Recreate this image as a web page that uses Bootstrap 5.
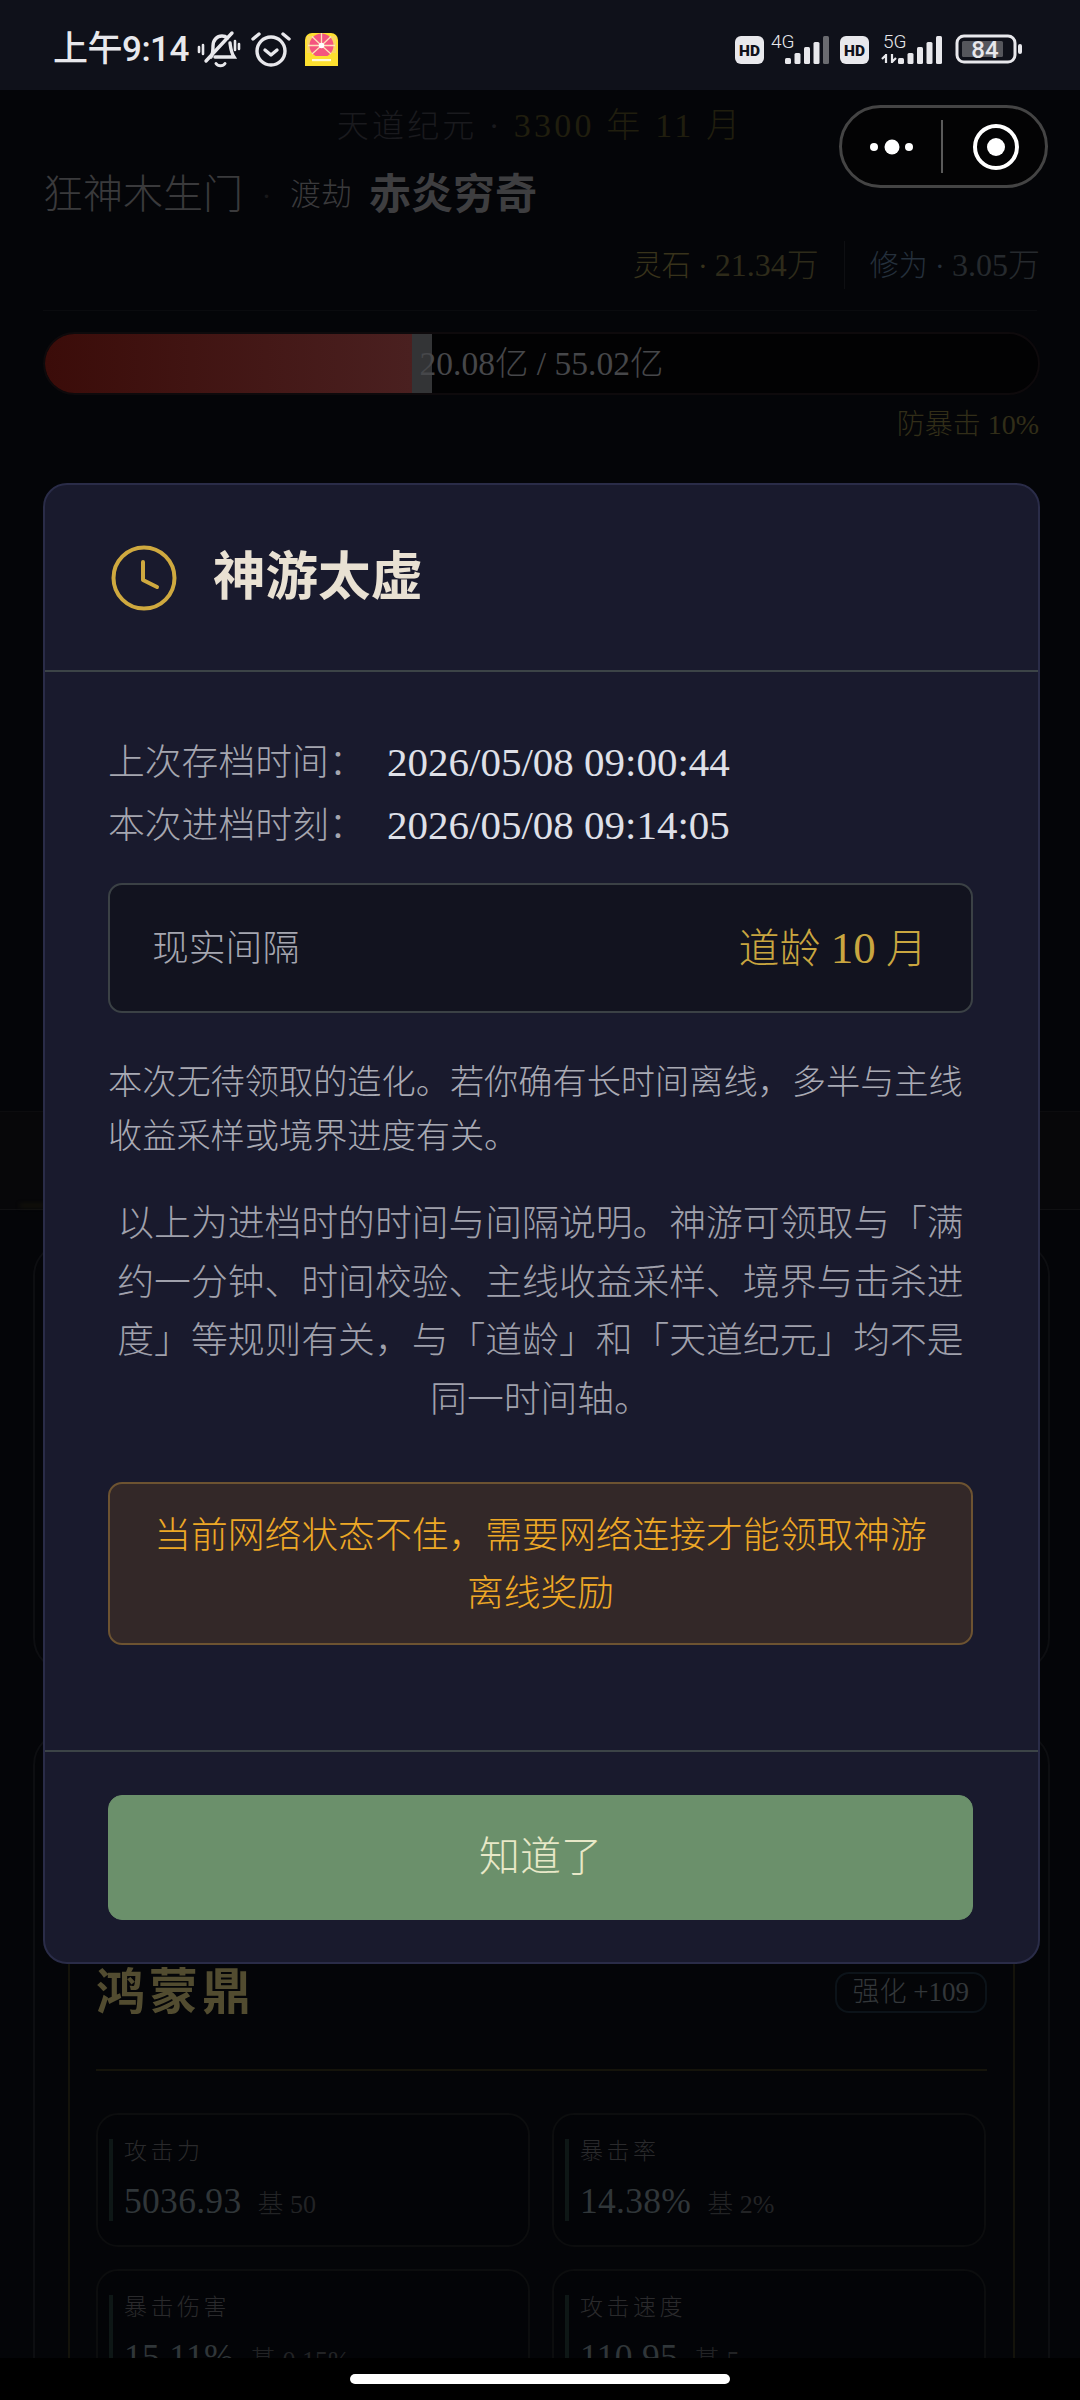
<!DOCTYPE html>
<html lang="zh-CN">
<head>
    <meta charset="UTF-8">
    <meta name="viewport" content="width=device-width, initial-scale=1.0">
    <title>神游太虚</title>
    <link href="https://cdn.jsdelivr.net/npm/bootstrap@5.3.2/dist/css/bootstrap.min.css" rel="stylesheet">
    <style>
        html, body { background: #000; }
        body { width: 1080px; height: 2400px; overflow: hidden; position: relative; font-family: "Liberation Serif", "Noto Sans CJK SC", serif; font-weight: 300; }

        /* status bar */
        .status-bar { height: 90px; background: #0f111a; color: #e8e8ec; padding: 0 58px 0 53px; font-family: Roboto, "Noto Sans CJK SC", sans-serif; }
        .status-time { font-size: 35px; font-weight: 500; line-height: 1; letter-spacing: -.5px; }
        .status-bar svg { display: block; }
        .status-bar text { font-family: Roboto, sans-serif; fill: #e8e8ec; }
        .alarm-ico { margin: 0 14px 0 10px; }

        /* dimmed game page behind the dialog */
        .game-page { height: 2268px; overflow: hidden; position: relative; background: #040508; }
        .era-line { height: 70px; color: #1a1a1e; font-size: 32px; letter-spacing: 3.2px; }
        .era-line b { font-weight: 300; color: #201e0e; font-size: 34px; }
        .sect-row { height: 70px; padding-left: 43px; color: #3a3a3c; }
        .sect-name { font-size: 40px; }
        .sect-dot { width: 47px; text-align: center; color: #18181a; font-size: 30px; }
        .sect-rank { font-size: 31px; }
        .sect-boss { font-size: 42px; font-weight: 700; margin-left: 17px; color: #3e3e40; }
        .res-row { height: 60px; margin-top: 5px; padding-right: 40px; font-size: 29px; }
        .res-stone { color: #38331b; }
        .res-stone .num { color: #2e2b1a; }
        .res-cult { color: #25303c; border-left: 1px solid #0e0f12; margin-left: 25px; padding-left: 25px; }
        .res-cult .num { color: #262a2e; }
        .res-row .num { font-size: 32px; }
        .page-rule { height: 1px; margin: 15px 43px 21px; background: #0a0b0e; }
        .hp-track { height: 63px; margin: 0 40px 0 43px; background: #020203; border: 2px solid #0e0a0c; border-radius: 32px; overflow: hidden; position: relative; }
        .hp-fill { width: 367px; background: linear-gradient(90deg, #3b0c09, #4a2020); }
        .hp-tip { width: 20px; background: #333436; }
        .hp-text { color: #46474a; font-size: 33.500px; white-space: nowrap; }
        .guard-line { height: 60px; padding-right: 41px; color: #322e18; font-size: 28px; }
        .tab-band { height: 99px; margin-top: 656px; background: #070709; border-top: 1px solid #0c0c0e; border-bottom: 1px solid #101012; position: relative; }
        .tab-glow { position: absolute; left: 20px; bottom: 2px; width: 24px; height: 3px; background: #17150b; filter: blur(2px); }
        .panel { margin: 0 30px 0 33px; border: 2px solid #0d0e11; border-radius: 34px; }
        .panel-top { height: 430px; margin-top: 32px; }
        .panel-gear { margin-top: 59px; height: 700px; padding: 165px 33px 0 33px; }
        .gear-box { height: 600px; border: 2px solid #14130b; border-bottom: 0; padding: 68px 26px 0 26px; }
        .gear-name { font-size: 49px; font-weight: 700; color: #524c30; letter-spacing: 4px; line-height: 1; }
        .gear-level { height: 41px; padding: 0 16px; border: 2px solid #0c1319; border-radius: 14px; color: #33373a; font-size: 27px; }
        .gear-rule { height: 2px; margin: 52px 0 42px; background: #15140b; }
        .stat-grid { display: grid; grid-template-columns: 434px 434px; column-gap: 22px; row-gap: 22px; }
        .stat-cell { height: 134px; border: 2px solid #0c0d0e; border-radius: 22px; background: #030407; padding: 24px 0 0 11px; }
        .stat-inner { border-left: 4px solid #0e1716; padding-left: 11px; height: 82px; }
        .stat-label { color: #2a2a2c; font-size: 23px; letter-spacing: 3.5px; line-height: 26px; }
        .stat-value { color: #303639; font-size: 35.500px; line-height: 40px; margin-top: 16px; letter-spacing: .3px; white-space: nowrap; }
        .stat-base { color: #222325; font-size: 26px; margin-left: 16px; letter-spacing: 0; }

        /* wechat capsule */
        .mini-capsule { position: absolute; left: 839px; top: 15px; width: 209px; height: 83px; border: 3px solid #444; border-radius: 42px; background: #030304; }

        /* dialog */
        .dialog-box { position: absolute; left: 43px; top: 483px; width: 997px; height: 1481px; background: #191a2d; border: 2px solid #2a2c48; border-radius: 24px; font-size: 36.800px; color: #a5a6b0; }
        .dialog-head { height: 187px; padding-left: 66px; gap: 36px; border-bottom: 2px solid #3c4447; }
        .dialog-head h2 { margin: 0; font-size: 52.500px; font-weight: 700; color: #e9e1d3; line-height: 1; }
        .dialog-body { flex: 1; padding: 59px 65px 0 63px; }
        .time-row { height: 63px; }
        .time-key { width: 279px; }
        .time-val { color: #dfe0e8; font-size: 41px; line-height: 1; }
        .gap-box { height: 130px; margin-top: 26px; padding: 2px 44px 0 42px; background: #12131f; border: 2px solid #3b4145; border-radius: 14px; }
        .gap-val { color: #c9a640; font-size: 41px; }
        .gap-val .num { font-size: 45px; }
        .note-first { font-size: 34.200px; line-height: 54px; margin: 43px 0 0; color: #a9aab4; }
        .note-second { line-height: 58.700px; margin: 31px 0 0; color: #a0a1ac; }
        .warn-box { height: 163px; margin-top: 52px; padding: 23px 30px 0; line-height: 58.600px; background: #332828; border: 2px solid #6d5331; border-radius: 14px; color: #eea826; }
        .dialog-foot { height: 212px; padding: 43px 65px 0 63px; border-top: 2px solid #3c4447; }
        .ok-btn { height: 125px; --bs-btn-bg: #6b906b; --bs-btn-hover-bg: #6b906b; --bs-btn-color: #e8e8c8; --bs-btn-border-color: #6b906b; --bs-btn-border-radius: 14px; font-size: 41px; font-weight: 300; }

        /* gesture bar */
        .gesture-bar { height: 42px; background: #000; padding-top: 16px; }
        .gesture-pill { width: 380px; height: 10px; border-radius: 5px; background: #fff; }
    </style>
</head>
<body>
    <div class="status-bar d-flex align-items-center justify-content-between">
        <div class="d-flex align-items-center pt-2">
            <span class="status-time">上午9:14</span>
            <!-- muted bell -->
            <svg class="ms-2" width="44" height="38" viewBox="0 0 44 38" fill="none" stroke="#e8e8ec" stroke-width="3.400" stroke-linecap="round">
                <path d="M14 27c2-3 2-6 2-11 0-6 4-10 9-10 2 0 4 .7 5.400 2"/>
                <path d="M33 13c.6 4 .8 9 4 14H18"/>
                <path d="M9 31 35 3"/>
                <path d="M19 33.500c2 3 7 3 9 0" stroke-width="3"/>
                <path d="M6 15v9M2 17v5M38 11v9M42 14v5" stroke-width="2.600"/>
            </svg>
            <!-- alarm -->
            <svg class="alarm-ico" width="40" height="36" viewBox="0 0 40 36" fill="none" stroke="#e8e8ec" stroke-width="3.400" stroke-linecap="round" stroke-linejoin="round">
                <circle cx="20" cy="20" r="14"/>
                <path d="M14 19l6 5 6-5"/>
                <path d="M2 8l6-5M38 8l-6-5"/>
            </svg>
            <!-- app notification icon -->
            <svg width="33" height="33" viewBox="0 0 33 33">
                <rect width="33" height="33" rx="7" fill="#fde02f"/>
                <path d="M2 3h29v17H2z" fill="#f3c9a0" opacity=".45"/>
                <circle cx="16.500" cy="12.500" r="12" fill="#f4557f"/>
                <path d="M16.500 12.500V0M16.500 12.500 7 3.500M16.500 12.500 26 3.500M16.500 12.500H3M16.500 12.500H30M16.500 12.500 7 21M16.500 12.500 26 21" stroke="#fde2b8" stroke-width="1.300"/>
                <circle cx="16.500" cy="12.500" r="2.800" fill="#fff"/>
                <rect x="0" y="23" width="33" height="10" fill="#fde02f"/>
                <rect x="7" y="26" width="19" height="2.200" fill="#fff" opacity=".8"/>
            </svg>
        </div>
        <svg width="287" height="40" viewBox="0 -7 287 40">
            <!-- HD + 4G -->
            <rect x="0" y="4" width="29" height="28" rx="6" fill="#e8e8ec"/>
            <text x="14.500" y="24" font-size="15.500" font-weight="900" text-anchor="middle" style="fill:#0f111a">HD</text>
            <text x="36" y="15.500" font-size="19">4G</text>
            <rect x="50" y="26" width="6" height="6" rx="1.500" fill="#e8e8ec"/>
            <rect x="59.500" y="21" width="6" height="11" rx="1.500" fill="#e8e8ec"/>
            <rect x="69" y="15" width="6" height="17" rx="1.500" fill="#e8e8ec"/>
            <rect x="78.500" y="10" width="6" height="22" rx="1.500" fill="#e8e8ec"/>
            <rect x="88" y="4" width="6" height="28" rx="1.500" fill="#6a6b70"/>
            <!-- HD + 5G -->
            <rect x="105" y="4" width="29" height="28" rx="6" fill="#e8e8ec"/>
            <text x="119.500" y="24" font-size="15.500" font-weight="900" text-anchor="middle" style="fill:#0f111a">HD</text>
            <text x="148" y="15.500" font-size="19">5G</text>
            <path d="M151 22v9M147 27l4-4M157 22v9M157 30l4-4" fill="none" stroke="#e8e8ec" stroke-width="2.200"/>
            <rect x="163" y="26" width="6" height="6" rx="1.500" fill="#e8e8ec"/>
            <rect x="172.500" y="21" width="6" height="11" rx="1.500" fill="#e8e8ec"/>
            <rect x="182" y="15" width="6" height="17" rx="1.500" fill="#e8e8ec"/>
            <rect x="191.500" y="10" width="6" height="22" rx="1.500" fill="#e8e8ec"/>
            <rect x="201" y="4" width="6" height="28" rx="1.500" fill="#e8e8ec"/>
            <!-- battery -->
            <rect x="222" y="4" width="58" height="26" rx="7" fill="none" stroke="#e8e8ec" stroke-width="3"/>
            <rect x="227" y="9" width="41" height="16" rx="1.500" fill="#55565c"/>
            <text x="250" y="25.500" font-size="24" font-weight="500" text-anchor="middle">84</text>
            <rect x="283" y="12" width="4" height="10" rx="2" fill="#e8e8ec"/>
        </svg>
    </div>

    <div class="game-page">
        <div class="era-line d-flex align-items-center justify-content-center"><span>天道纪元 · <b>3300 年 11 月</b></span></div>
        <div class="sect-row d-flex align-items-center">
            <span class="sect-name">狂神木生门</span>
            <span class="sect-dot">·</span>
            <span class="sect-rank">渡劫</span>
            <span class="sect-boss">赤炎穷奇</span>
        </div>
        <div class="res-row d-flex align-items-center justify-content-end">
            <span class="res-stone">灵石 · <span class="num">21.34万</span></span>
            <span class="res-cult">修为 · <span class="num">3.05万</span></span>
        </div>
        <div class="page-rule"></div>
        <div class="hp-track d-flex">
            <div class="hp-fill"></div>
            <div class="hp-tip"></div>
            <div class="hp-text position-absolute top-50 start-50 translate-middle">20.08亿 / 55.02亿</div>
        </div>
        <div class="guard-line d-flex align-items-center justify-content-end">防暴击 10%</div>
        <div class="tab-band"><div class="tab-glow"></div></div>
        <div class="panel panel-top"></div>
        <div class="panel panel-gear">
            <div class="gear-box">
                <div class="d-flex align-items-center justify-content-between">
                    <div class="gear-name">鸿蒙鼎</div>
                    <div class="gear-level d-flex align-items-center">强化 +109</div>
                </div>
                <div class="gear-rule"></div>
                <div class="stat-grid">
                    <div class="stat-cell"><div class="stat-inner"><div class="stat-label">攻击力</div><div class="stat-value">5036.93<span class="stat-base">基 50</span></div></div></div>
                    <div class="stat-cell"><div class="stat-inner"><div class="stat-label">暴击率</div><div class="stat-value">14.38%<span class="stat-base">基 2%</span></div></div></div>
                    <div class="stat-cell"><div class="stat-inner"><div class="stat-label">暴击伤害</div><div class="stat-value">15.11%<span class="stat-base">基 0.15%</span></div></div></div>
                    <div class="stat-cell"><div class="stat-inner"><div class="stat-label">攻击速度</div><div class="stat-value">110.95<span class="stat-base">基 5</span></div></div></div>
                </div>
            </div>
        </div>
        <div class="mini-capsule d-flex align-items-center justify-content-center">
            <svg class="me-2" width="160" height="60" viewBox="0 0 160 60" fill="#fff">
                <circle cx="14" cy="30" r="4"/>
                <circle cx="32" cy="30" r="7.500"/>
                <circle cx="49" cy="30" r="4"/>
                <rect x="81" y="3" width="2" height="53" fill="#5a5a5a"/>
                <circle cx="136" cy="30" r="21" fill="none" stroke="#fff" stroke-width="4"/>
                <circle cx="136" cy="30" r="9"/>
            </svg>
        </div>
    </div>

    <div class="gesture-bar d-flex justify-content-center"><div class="gesture-pill"></div></div>

    <div class="dialog-box d-flex flex-column">
        <div class="dialog-head d-flex align-items-center">
            <svg width="66" height="66" viewBox="0 0 66 66" fill="none" stroke="#cfa93f" stroke-width="4" stroke-linecap="round" stroke-linejoin="round">
                <circle cx="33" cy="33" r="30.500"/>
                <path d="M32 17v18l14 7"/>
            </svg>
            <h2>神游太虚</h2>
        </div>
        <div class="dialog-body">
            <div class="time-row d-flex align-items-center">
                <span class="time-key">上次存档时间：</span>
                <span class="time-val">2026/05/08 09:00:44</span>
            </div>
            <div class="time-row d-flex align-items-center">
                <span class="time-key">本次进档时刻：</span>
                <span class="time-val">2026/05/08 09:14:05</span>
            </div>
            <div class="gap-box d-flex align-items-center justify-content-between">
                <span>现实间隔</span>
                <span class="gap-val">道龄 <span class="num">10</span> 月</span>
            </div>
            <p class="note-first">本次无待领取的造化。若你确有长时间离线，多半与主线收益采样或境界进度有关。</p>
            <p class="note-second text-center">以上为进档时的时间与间隔说明。神游可领取与「满约一分钟、时间校验、主线收益采样、境界与击杀进度」等规则有关，与「道龄」和「天道纪元」均不是同一时间轴。</p>
            <div class="warn-box text-center">当前网络状态不佳，需要网络连接才能领取神游离线奖励</div>
        </div>
        <div class="dialog-foot">
            <button type="button" class="btn ok-btn w-100">知道了</button>
        </div>
    </div>
    <script src="https://cdn.jsdelivr.net/npm/bootstrap@5.3.2/dist/js/bootstrap.bundle.min.js"></script>
</body>
</html>
